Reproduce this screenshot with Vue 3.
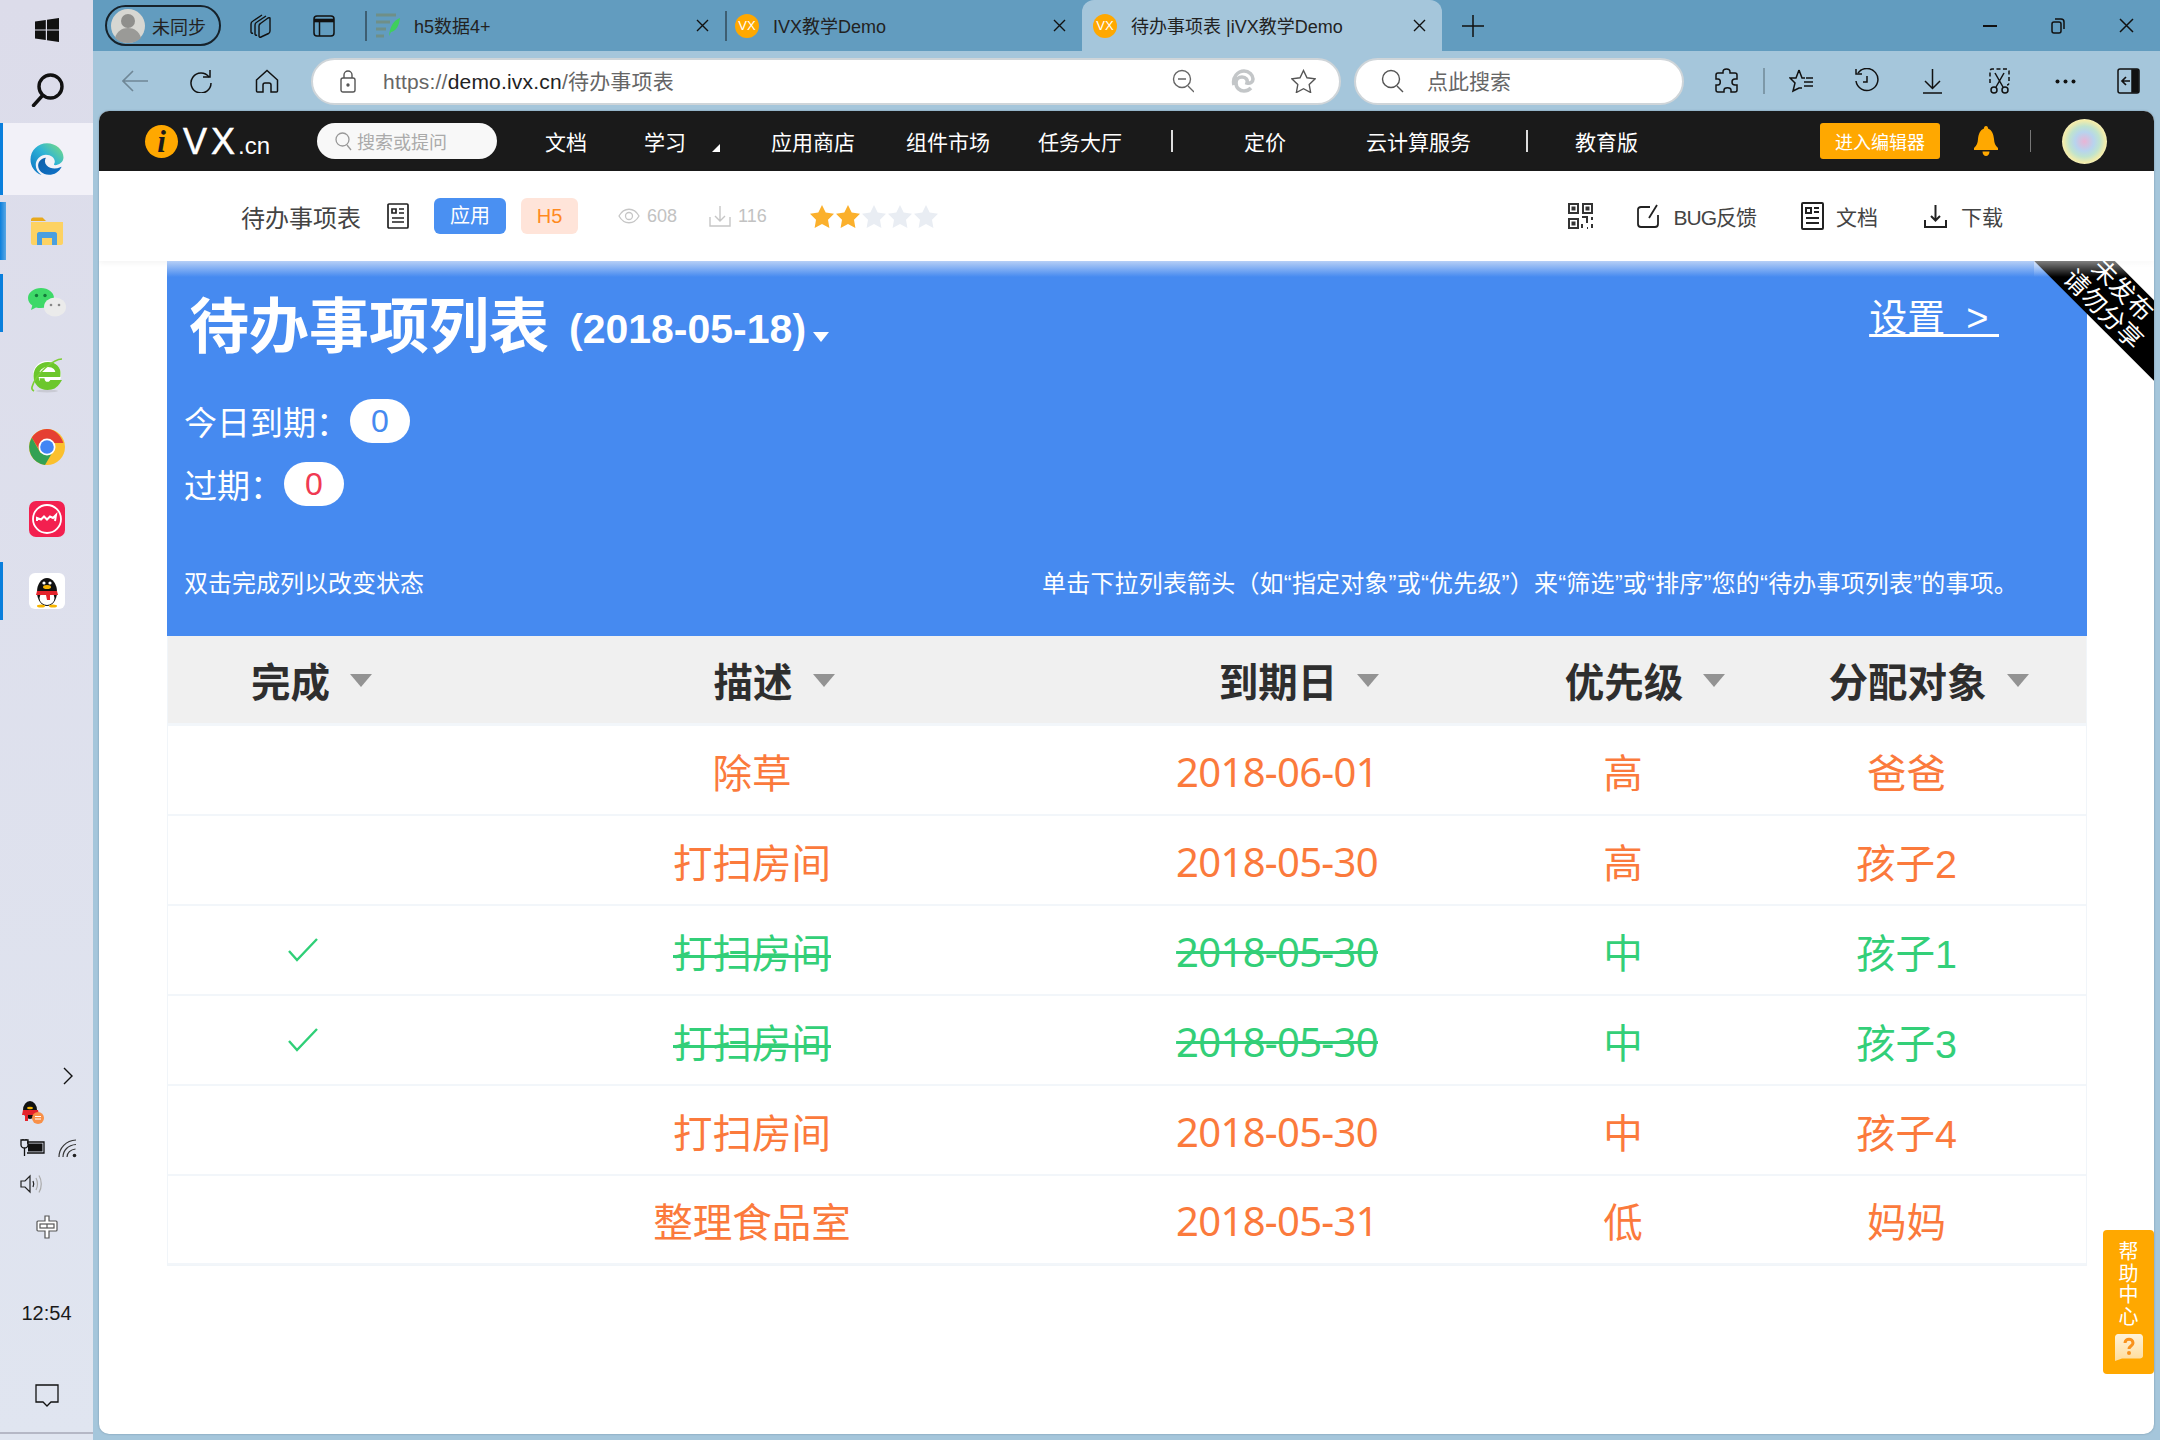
<template>
  <div class="app">
    <!-- vertical windows taskbar -->
    <aside class="taskbar">
      <div class="tb-start">
        <svg width="24" height="24" viewBox="0 0 24 24"><path fill="#111" d="M0 3.5 10.8 2v9.4H0zM12 1.8 24 0v11.4H12zM0 12.6h10.800v9.400L0 20.500zM12 12.600h12V24l-12-1.800z"/></svg>
      </div>
      <div class="tb-search">
        <svg width="34" height="34" viewBox="0 0 34 34" fill="none" stroke="#111" stroke-width="3.400"><circle cx="20.500" cy="13.500" r="11.500"/><path d="M12.500 22.500 3.500 32.500" stroke-linecap="round"/></svg>
      </div>
      <div class="tb-app active"><i class="mark"></i>
        <svg width="36" height="36" viewBox="0 0 24 24">
          <defs>
            <linearGradient id="edgeA" x1="0" y1="1" x2="1" y2="0"><stop offset="0" stop-color="#0b6fc4"/><stop offset=".55" stop-color="#2fb4d6"/><stop offset="1" stop-color="#7fe07a"/></linearGradient>
            <linearGradient id="edgeB" x1="0" y1="0" x2="1" y2="1"><stop offset="0" stop-color="#0d5da8"/><stop offset="1" stop-color="#0f74c9"/></linearGradient>
          </defs>
          <path fill="url(#edgeA)" d="M12 1.500C6 1.500 1 6.200 1 12.300c0 4.300 2.600 8.800 7.400 10.300-2.700-1.700-3.900-4-3.900-6.600 0-3.800 3.300-6.800 6.800-6.800 3.300 0 5.900 2.100 5.900 4.600 0 .7-.2 1.100-.5 1.600-.2.300 0 .7.800.7 2.300 0 5.500-1.700 5.500-5.200C23 6 18 1.500 12 1.500z"/>
          <path fill="url(#edgeB)" d="M21.800 17.100c-.3.100-.6.300-1 .4-3.200 1.400-7 1-9.100-1.400-1.300-1.500-1.400-3.500-.4-5-2.800.2-5.200 2.400-5.200 5.200 0 3.100 2.900 6.200 7.200 6.200 3.600 0 6.800-2 8.500-5.400z"/>
        </svg>
      </div>
      <div class="tb-app"><i class="mark wide"></i>
        <svg width="34" height="28" viewBox="0 0 34 28"><path fill="#e8a91c" d="M1 3c0-1.500 1-2.500 2.500-2.500h9L16 4H1z"/><path fill="#fdd262" d="M1 5h32v21c0 1-1 2-2 2H3c-1 0-2-1-2-2z"/><path fill="#4a9fe0" d="M7 28V17c0-1 1-2 2-2h16c1 0 2 1 2 2v11h-5v-7H12v7z"/></svg>
      </div>
      <div class="tb-app"><i class="mark"></i>
        <svg width="38" height="32" viewBox="0 0 38 32"><path fill="#3ed968" d="M13 1C6 1 0 5.500 0 11c0 3 1.700 5.600 4.300 7.500L3 23l5-2.600c1.500.4 3.200.6 5 .6 7.200 0 13-4.500 13-10S20.200 1 13 1z"/><circle cx="8.500" cy="8.500" r="1.700" fill="#137a3a"/><circle cx="17" cy="8.500" r="1.700" fill="#137a3a"/><ellipse cx="27" cy="20" rx="11" ry="9.500" fill="#ebebeb"/><circle cx="23" cy="18" r="1.300" fill="#888"/><circle cx="31" cy="18" r="1.300" fill="#888"/></svg>
      </div>
      <div class="tb-app">
        <svg width="34" height="36" viewBox="0 0 34 36" fill="none"><ellipse cx="17" cy="34" rx="11" ry="1.500" fill="#c9cad4"/><circle cx="17" cy="18" r="14" fill="#fff"/><path d="M7 17.500h21c.5-6-3.500-10-10-10C11 7.500 6 12 6 19c0 7 5 11.500 11.500 11.500 4.500 0 8-1.800 10-5h-6c-1 1.200-2.400 1.800-4 1.800-3.200 0-5.500-2.500-5.500-6" stroke="#6cc72c" stroke-width="5"/><path d="M32 2C24 2 6 16 2 30c-.6 2 0 3 2 4" stroke="#7dcf36" stroke-width="1.600"/></svg>
      </div>
      <div class="tb-app">
        <svg width="36" height="36" viewBox="0 0 36 36"><circle cx="18" cy="18" r="18" fill="#fbc02d"/><path fill="#e53f33" d="M18 0C11.500 0 6 3.500 2.800 8.700L11 22l3-8h20.400C31.800 6 25.500 0 18 0z"/><path fill="#33a153" d="M2.800 8.700A18 18 0 0 0 16 35.900L23 24H11.500z"/><circle cx="18" cy="18" r="8.500" fill="#fff"/><circle cx="18" cy="18" r="6.800" fill="#4285f4"/></svg>
      </div>
      <div class="tb-app">
        <svg width="36" height="36" viewBox="0 0 36 36" fill="none"><rect width="36" height="36" rx="7" fill="#f3204f"/><circle cx="18" cy="18" r="14" stroke="#fff" stroke-width="1.800"/><path d="M8 20v-3l4 1.500 3-3 3 3 3-3 3 1.500 3-3-1 6" stroke="#fff" stroke-width="2"/></svg>
      </div>
      <div class="tb-app"><i class="mark"></i>
        <svg width="36" height="36" viewBox="0 0 36 36"><rect width="36" height="36" rx="6" fill="#fff"/><ellipse cx="18" cy="19" rx="10" ry="14" fill="#111"/><ellipse cx="18" cy="25" rx="7.500" ry="7" fill="#fff"/><path fill="#e4232b" d="M8 18h20l1 4H21v5h-3l-1-5H7z"/><ellipse cx="18" cy="14" rx="4" ry="2" fill="#f7b500"/><circle cx="15" cy="10" r="1.600" fill="#fff"/><circle cx="21" cy="10" r="1.600" fill="#fff"/><ellipse cx="12" cy="33" rx="4" ry="1.500" fill="#f7b500"/><ellipse cx="24" cy="33" rx="4" ry="1.500" fill="#f7b500"/></svg>
      </div>

      <div class="tb-tray">
        <div class="tray-row right">
          <svg width="10" height="18" viewBox="0 0 10 18" fill="none" stroke="#111" stroke-width="1.400"><path d="M1 1l8 8-8 8"/></svg>
        </div>
        <div class="tray-row">
          <svg width="25" height="25" viewBox="0 0 25 25"><ellipse cx="10" cy="10" rx="7" ry="9" fill="#111"/><path fill="#e4232b" d="M3 10h15l1 5H8v6H5v-6H2z"/><ellipse cx="10" cy="8" rx="3" ry="1.300" fill="#f7b500"/><circle cx="18" cy="18" r="6" fill="#f89048"/><path d="M15 16.500h6M15 19h6" stroke="#fff"/></svg>
        </div>
        <div class="tray-row between">
          <svg width="25" height="18" viewBox="0 0 25 18" fill="none" stroke="#111" stroke-width="1.300"><path d="M1 1v5c0 2 2 3 3.500 3S8 8 8 6V1zM3 1V0M6 1V0M4.500 9v8M8 4h-1"/><path d="M7 3h17v11H7"/><rect x="8" y="4.500" width="14.500" height="8" fill="#111" stroke="none"/></svg>
          <svg width="20" height="19" viewBox="0 0 20 19" fill="none" stroke="#333" stroke-width="1.200"><path d="M1 18C1 9 8 1.500 18 1M5 18c0-6.500 5-12 13-12.500M9 18c0-4 3.500-7.500 8.500-8"/><circle cx="16.500" cy="16.500" r="1.800" fill="#222" stroke="none"/></svg>
        </div>
        <div class="tray-row">
          <svg width="23" height="20" viewBox="0 0 23 20" fill="none" stroke="#222" stroke-width="1.200"><path d="M1 7v6h4l5 5V2L5 7z"/><path d="M13 7c1 2 1 4 0 6" /><path d="M16 4c2 4 2 8 0 12M19 1.500c3 5 3 12 0 17" stroke="#aaa"/></svg>
        </div>
        <div class="tray-ime">
          <svg width="22" height="24" viewBox="0 0 22 24" fill="#fff" stroke="#555" stroke-width="1.200"><path d="M9 1h4v5h7c1 0 1 .5 1 1v8c0 1-.5 1-1 1h-7v7H9v-7H2c-.5 0-1-.5-1-1V7c0-.5.5-1 1-1h7z"/><rect x="4" y="9" width="14" height="4"/><path d="M11 9v4"/></svg>
        </div>
        <div class="tray-clock">12:54</div>
        <div class="tray-ime notify">
          <svg width="24" height="24" viewBox="0 0 24 24" fill="none" stroke="#111" stroke-width="1.300"><path d="M1 1h22v17h-7l-4 4-4-4H1z"/></svg>
        </div>
      </div>
      <div class="tb-line"></div>
    </aside>

    <div class="browser">
      <!-- tab strip -->
      <div class="tabstrip">
        <div class="profile">
          <svg width="34" height="34" viewBox="0 0 34 34"><circle cx="17" cy="17" r="17" fill="#d7d7d2"/><circle cx="17" cy="12" r="7" fill="#8f8f8c"/><path fill="#9a9a97" d="M4 29c2-7 7-10 13-10s11 3 13 10c-3 3-8 5-13 5s-10-2-13-5z"/></svg>
          <span>未同步</span>
        </div>
        <svg class="ts-collect" width="22" height="24" viewBox="0 0 22 24" fill="none" stroke="#111" stroke-width="1.400"><path d="M12 1 3 7c-1 .6-2 2-2 3v8c0 1 1 1.500 2 1"/><path d="M16 2 7 8c-1 .6-2 2-2 3v9c0 1 1 1.500 2 1"/><path d="M20 4v13c0 1-.5 2-1.500 2.500L11 23c-1 .5-2 0-2-1V12c0-1 .5-2 1.500-2.500L18 4c1-.5 2-.5 2 0z"/></svg>
        <svg class="ts-tabs" width="22" height="22" viewBox="0 0 22 22" fill="none" stroke="#111" stroke-width="1.500"><rect x="1" y="1" width="20" height="20" rx="3"/><path d="M1 5.500h20" stroke-width="3.600"/><path d="M6.500 6v15"/></svg>
        <div class="tab first">
          <svg class="fav-doc" width="26" height="26" viewBox="0 0 26 26"><path d="M0 2h20M0 9h14M0 16h10M0 23h8" stroke="#6f8f88" stroke-width="3"/><path fill="#3ecf5c" d="M24 5c-6 2-10 8-11 18l2-4c5-1 8-6 9-14z"/></svg>
          <span class="tab-title">h5数据4+</span>
          <svg class="tab-x" width="13" height="13" viewBox="0 0 13 13" stroke="#111" stroke-width="1.400"><path d="M1 1l11 11M12 1 1 12"/></svg>
        </div>
        <div class="tab second">
          <span class="fav-vx">VX</span>
          <span class="tab-title">IVX教学Demo</span>
          <svg class="tab-x" width="13" height="13" viewBox="0 0 13 13" stroke="#111" stroke-width="1.400"><path d="M1 1l11 11M12 1 1 12"/></svg>
        </div>
        <div class="tab current">
          <span class="fav-vx">VX</span>
          <span class="tab-title">待办事项表 |iVX教学Demo</span>
          <svg class="tab-x" width="13" height="13" viewBox="0 0 13 13" stroke="#111" stroke-width="1.400"><path d="M1 1l11 11M12 1 1 12"/></svg>
        </div>
        <svg class="ts-plus" width="22" height="22" viewBox="0 0 22 22" stroke="#111" stroke-width="1.500"><path d="M11 0v22M0 11h22"/></svg>
        <div class="winctl">
          <svg width="14" height="14" viewBox="0 0 14 14" stroke="#111" stroke-width="2"><path d="M0 7h14"/></svg>
          <svg width="14" height="16" viewBox="0 0 14 16" fill="none" stroke="#111" stroke-width="1.500"><rect x="1" y="4" width="9" height="11" rx="2"/><path d="M4 1h6c2 0 3 1 3 3v7"/></svg>
          <svg width="15" height="15" viewBox="0 0 15 15" stroke="#111" stroke-width="1.500"><path d="M1 1l13 13M14 1 1 14"/></svg>
        </div>
      </div>

      <!-- address bar row -->
      <div class="toolbar">
        <svg width="26" height="22" viewBox="0 0 26 22" fill="none" stroke="#6f8796" stroke-width="1.600"><path d="M11 1 1 11l10 10M1 11h25"/></svg>
        <svg class="tl-reload" width="23" height="24" viewBox="0 0 23 24" fill="none" stroke="#111" stroke-width="1.500"><path d="M20 8a10 10 0 1 0 2 6"/><path d="M21 1v7h-7"/></svg>
        <svg class="tl-home" width="24" height="24" viewBox="0 0 24 24" fill="none" stroke="#111" stroke-width="1.500"><path d="M1.500 11 12 1.500 22.500 11v11c0 .5-.5 1-1 1H16v-7c0-1-1-2-2-2h-4c-1 0-2 1-2 2v7H2.500c-.5 0-1-.5-1-1z"/></svg>
        <div class="urlbar">
          <svg width="16" height="23" viewBox="0 0 16 23" fill="none" stroke="#555" stroke-width="1.400"><rect x="1" y="8" width="14" height="14" rx="2"/><path d="M4 8V5a4 4 0 0 1 8 0v3"/><circle cx="8" cy="15" r="1" fill="#555"/></svg>
          <span class="url"><b>https://</b>demo.ivx.cn<b>/待办事项表</b></span>
          <svg class="ub-zoom" width="22" height="24" viewBox="0 0 22 24" fill="none" stroke="#666" stroke-width="1.400"><circle cx="10" cy="10" r="8.500"/><path d="M16 17l6 6M6 10h8"/></svg>
          <svg class="ub-edge" width="24" height="24" viewBox="0 0 24 24" fill="none" stroke="#c3c6c8" stroke-width="3.600"><path d="M3 16C1 8 7 2 13 2c5 0 9 4 9 8 0 3-3 5-6 4 1-3-1-6-5-6-4 0-6 3-6 6 0 5 4 8 8 8 3 0 5-1 7-3"/></svg>
          <svg class="ub-star" width="25" height="24" viewBox="0 0 25 24" fill="none" stroke="#555" stroke-width="1.400"><path d="M12.500 1.500 16 8.800l8 1.100-5.800 5.600 1.400 8-7.100-3.800-7.100 3.800 1.400-8L1 9.900l8-1.100z"/></svg>
        </div>
        <div class="searchbar">
          <svg width="23" height="24" viewBox="0 0 23 24" fill="none" stroke="#555" stroke-width="1.400"><circle cx="10" cy="10" r="8.500"/><path d="M16 17l6 6"/></svg>
          <span>点此搜索</span>
        </div>
        <svg class="tl-ext" width="23" height="26" viewBox="0 0 23 26" fill="none" stroke="#111" stroke-width="1.500"><path d="M8 4c0-4 7-4 7 0v1h5c1 0 2 1 2 2v4h-2c-4 0-4 6 0 6h2v5c0 1-1 2-2 2h-4v-2c0-3-7-3-7 0v2H3c-1 0-2-1-2-2v-5h2c3 0 3-6 0-6H1V7c0-1 1-2 2-2h5z"/></svg>
        <i class="tl-div"></i>
        <svg class="tl-fav" width="25" height="26" viewBox="0 0 25 26" fill="none" stroke="#111" stroke-width="1.500"><path d="M10 2l3 8h3M10 2 7 10H1l5 5-2 8 6-3h3M15 14h9M17 10h7M15 18h9"/></svg>
        <svg class="tl-hist" width="25" height="26" viewBox="0 0 25 26" fill="none" stroke="#111" stroke-width="1.500"><path d="M3 5a11 11 0 1 1-2 8"/><path d="M1 1v5h6M12 8v6h-4"/></svg>
        <svg class="tl-down" width="19" height="26" viewBox="0 0 19 26" fill="none" stroke="#111" stroke-width="1.500"><path d="M9.500 1v19M2 13l7.500 7.500L17 13M0 25h19"/></svg>
        <svg class="tl-cap" width="25" height="26" viewBox="0 0 25 26" fill="none" stroke="#111" stroke-width="1.500"><path d="M3 15V3c0-1 1-2 2-2h15c1 0 2 1 2 2v12c0 1-1 2-2 2" stroke-dasharray="4 2.500"/><path d="M8 5l8 14M17 5 9 19"/><circle cx="7" cy="22" r="3"/><circle cx="18" cy="22" r="3"/></svg>
        <svg class="tl-dots" width="21" height="5" viewBox="0 0 21 5" fill="#111"><circle cx="2.500" cy="2.500" r="2"/><circle cx="10.500" cy="2.500" r="2"/><circle cx="18.500" cy="2.500" r="2"/></svg>
        <svg class="tl-side" width="23" height="26" viewBox="0 0 23 26" fill="none" stroke="#111" stroke-width="1.500"><rect x="1" y="1" width="21" height="24" rx="2"/><path d="M15 2h6v22h-6z" fill="#111"/><path d="M13 13H6M9 9l-4 4 4 4" stroke-width="1.700"/></svg>
      </div>

      <div class="page">
        <!-- site nav -->
        <header class="topnav">
          <div class="logo">
            <span class="logo-i">i</span>
            <span class="logo-vx">VX</span>
            <span class="logo-cn">.cn</span>
          </div>
          <div class="nav-search">
            <svg width="17" height="19" viewBox="0 0 17 19" fill="none" stroke="#999" stroke-width="1.300"><circle cx="7.500" cy="7.500" r="6.500"/><path d="M12 13l4 5"/></svg>
            <span>搜索或提问</span>
          </div>
          <a class="nav n-doc">文档</a>
          <a class="nav n-learn">学习</a>
          <i class="nav-caret"></i>
          <a class="nav n-store">应用商店</a>
          <a class="nav n-part">组件市场</a>
          <a class="nav n-task">任务大厅</a>
          <i class="nav-bar bar-a"></i>
          <a class="nav n-price">定价</a>
          <a class="nav n-cloud">云计算服务</a>
          <i class="nav-bar bar-b"></i>
          <a class="nav n-edu">教育版</a>
          <button class="editor-btn">进入编辑器</button>
          <svg class="bell" width="24" height="30" viewBox="0 0 24 30" fill="#ffa800"><path d="M12 0c1.500 0 2 1 2 2.500C18 4 19.500 8 20 13c.3 4 1 6.500 4 9v2H0v-2c3-2.500 3.700-5 4-9 .5-5 2-9 6-10.500C10 1 10.500 0 12 0z"/><path d="M8.500 25.500h7c0 2.500-1.500 4.500-3.500 4.500s-3.500-2-3.500-4.500z"/></svg>
          <i class="nav-bar bar-c"></i>
          <span class="avatar"></span>
        </header>

        <!-- app info bar -->
        <div class="subbar">
          <span class="app-name">待办事项表</span>
          <svg class="sb-doc" width="22" height="26" viewBox="0 0 22 26" fill="none" stroke="#222" stroke-width="1.700"><rect x="1" y="1" width="20" height="24" rx="1"/><path d="M5 6h4v4H5zM12 6h5M12 10h5M5 15h12M5 19h12"/></svg>
          <span class="pill blue">应用</span>
          <span class="pill peach">H5</span>
          <svg class="sb-eye" width="22" height="16" viewBox="0 0 22 16" fill="none" stroke="#c6c6c6" stroke-width="1.300"><path d="M1 8c5-9 15-9 20 0-5 9-15 9-20 0z"/><circle cx="11" cy="8" r="3.500"/></svg>
          <span class="stat">608</span>
          <svg class="sb-dl" width="22" height="22" viewBox="0 0 22 22" fill="none" stroke="#c6c6c6" stroke-width="1.400"><path d="M11 1v15M6 11l5 5 5-5M1 12v9h20v-9"/></svg>
          <span class="stat">116</span>
          <div class="stars">
            <svg v-for="n in 5" :key="n" width="24" height="23" viewBox="0 0 24 23" :fill="n <= 2 ? '#fbb02c' : '#e9edf3'"><path d="M12 0l3.700 7.600 8.300 1.200-6 5.900 1.400 8.300L12 19.100l-7.400 3.900L6 14.700 0 8.800l8.300-1.200z"/></svg>
          </div>
          <svg class="sb-qr" width="25" height="26" viewBox="0 0 25 26" fill="none" stroke="#333" stroke-width="2"><rect x="1" y="1" width="9" height="9"/><rect x="15" y="1" width="9" height="9"/><rect x="1" y="16" width="9" height="9"/><path d="M4.500 4.500h2v2h-2zM18.500 4.500h2v2h-2zM4.500 19.500h2v2h-2zM14 14h5v6M24 14v3M14 25v-4M19 25h1M24 21v4"/></svg>
          <svg class="sb-edit" width="22" height="24" viewBox="0 0 22 24" fill="none" stroke="#222" stroke-width="1.800"><path d="M13 3H4C2 3 1 4 1 5.500V20c0 2 1 3 3 3h14c2 0 3-1 3-3v-9M12 14 20 1"/></svg>
          <span class="sb-text bug">BUG反馈</span>
          <svg class="sb-doc2" width="23" height="28" viewBox="0 0 23 28" fill="none" stroke="#222" stroke-width="2"><rect x="1" y="1" width="21" height="26" rx="1"/><path d="M5 6h5v5H5zM13 6h5M13 10h5M5 16h13M5 21h13"/></svg>
          <span class="sb-text doc">文档</span>
          <svg class="sb-dl2" width="23" height="24" viewBox="0 0 23 24" fill="none" stroke="#222" stroke-width="2"><path d="M11.500 1v15M7 12l4.500 4.500L16 12M1 16v7h21v-7"/></svg>
          <span class="sb-text down">下载</span>
        </div>

        <section class="content">
          <div class="banner">
            <div class="banner-top">
              <h1>待办事项列表<small>(2018-05-18)</small><i class="date-caret"></i></h1>
              <a class="settings">设置&nbsp;&nbsp;&gt;&nbsp;</a>
            </div>
            <div class="stat-row first">今日到期：<span class="count today">0</span></div>
            <div class="stat-row">过期：<span class="count late">0</span></div>
            <div class="hints">
              <span>双击完成列以改变状态</span>
              <span class="hint-right">单击下拉列表箭头（如“指定对象”或“优先级”）来“筛选”或“排序”您的“待办事项列表”的事项。</span>
            </div>
          </div>

          <div class="table">
            <div class="thead">
              <div v-for="h in heads" :key="h" class="th" :class="{ 'th-done': h === '完成' }">
                <span class="th-label">{{ h }}<i class="th-caret"></i></span>
              </div>
            </div>
            <div v-for="(r, i) in rows" :key="i" class="tr" :class="{ done: r.done }">
              <div class="td td-check">
                <svg v-if="r.done" width="30" height="24" viewBox="0 0 30 24" fill="none" stroke="#2fcf77" stroke-width="2.400"><path d="M1 13l8 9L29 1"/></svg>
              </div>
              <div class="td strike">{{ r.desc }}</div>
              <div class="td strike date">{{ r.date }}</div>
              <div class="td">{{ r.level }}</div>
              <div class="td">{{ r.owner }}</div>
            </div>
          </div>

          <div class="ribbon"><div class="ribbon-band"><span>未发布</span><span>请勿分享</span></div></div>
        </section>

        <div class="help">
          <span class="help-text">帮助中心</span>
          <svg width="28" height="28" viewBox="0 0 28 28">
            <defs><linearGradient id="helpG" x1="0" y1="0" x2="0" y2="1"><stop offset="0" stop-color="#fff3d9"/><stop offset="1" stop-color="#ffdc9a"/></linearGradient></defs>
            <path fill="url(#helpG)" d="M3 0h22c1.500 0 3 1.500 3 3v19c0 1.500-1.500 2.500-3 2.500H7L0 27V3c0-1.500 1.500-3 3-3z"/>
            <path fill="none" stroke="#f9921c" stroke-width="3" d="M10 9c0-5 8-5 8 0 0 3-4 3-4 6"/><circle cx="14" cy="19" r="2" fill="#f9921c"/>
          </svg>
        </div>
      </div>
    </div>
  </div>
</template>

<script setup>
const heads = ["完成", "描述", "到期日", "优先级", "分配对象"];

const rows = [
  { desc: "除草", date: "2018-06-01", level: "高", owner: "爸爸", done: false },
  { desc: "打扫房间", date: "2018-05-30", level: "高", owner: "孩子2", done: false },
  { desc: "打扫房间", date: "2018-05-30", level: "中", owner: "孩子1", done: true },
  { desc: "打扫房间", date: "2018-05-30", level: "中", owner: "孩子3", done: true },
  { desc: "打扫房间", date: "2018-05-30", level: "中", owner: "孩子4", done: false },
  { desc: "整理食品室", date: "2018-05-31", level: "低", owner: "妈妈", done: false },
];
</script>

<style>
html,
body {
  margin: 0;
  background: #a5c6db;
}
</style>

<style scoped>
.app {
  display: flex;
  width: 2160px;
  height: 1440px;
  overflow: hidden;
  font-family: "Liberation Sans", "Noto Sans CJK SC", sans-serif;
  color: #222;
}

/* taskbar */
.taskbar {
  width: 93px;
  flex: none;
  display: flex;
  flex-direction: column;
  align-items: stretch;
  background: linear-gradient(#dcdcea, #e0e5f0);
}
.tb-start {
  height: 60px;
  display: flex;
  align-items: center;
  justify-content: center;
}
.tb-search {
  height: 63px;
  margin-top: -2px;
  padding-bottom: 2px;
  display: flex;
  align-items: center;
  justify-content: center;
}
.tb-app {
  position: relative;
  height: 72px;
  display: flex;
  align-items: center;
  justify-content: center;
}
.tb-app.active {
  background: #f2f1f8;
}
.mark {
  position: absolute;
  left: 0;
  top: 7px;
  bottom: 7px;
  width: 3px;
  background: #0a7fdc;
}
.tb-app.active .mark {
  top: 0;
  bottom: 0;
}
.mark.wide {
  width: 6px;
  background: linear-gradient(90deg, #0a7fdc, #5aa7e4);
}
.tb-tray {
  margin-top: auto;
}
.tray-row {
  height: 36px;
  display: flex;
  align-items: center;
  padding: 0 15px 0 20px;
}
.tray-row.right {
  justify-content: flex-end;
  padding-right: 20px;
}
.tray-row.between {
  justify-content: space-between;
}
.tray-ime {
  height: 50px;
  display: flex;
  align-items: center;
  justify-content: center;
}
.tray-ime.notify {
  margin-top: 33px;
  margin-bottom: 11px;
}
.tray-clock {
  margin-top: 36px;
  height: 50px;
  line-height: 50px;
  text-align: center;
  font-size: 20px;
  color: #1a1a1a;
}
.tb-line {
  height: 2px;
  margin-bottom: 6px;
  background: #b5b7c5;
}

/* browser chrome */
.browser {
  flex: 1;
  min-width: 0;
  display: flex;
  flex-direction: column;
  background: #a5c6db;
}
.tabstrip {
  height: 51px;
  flex: none;
  display: flex;
  align-items: center;
  padding-left: 12px;
  background: #629cbf;
  font-size: 18px;
  color: #222;
}
.profile {
  width: 116px;
  height: 41px;
  box-sizing: border-box;
  flex: none;
  display: flex;
  align-items: center;
  gap: 7px;
  padding-left: 4px;
  border: 2px solid #16222b;
  border-radius: 21px;
  white-space: nowrap;
}
.ts-collect {
  margin-left: 29px;
}
.ts-tabs {
  margin-left: 41px;
}
.tab {
  position: relative;
  height: 51px;
  flex: none;
  display: flex;
  align-items: center;
  box-sizing: border-box;
  padding: 0 16px 0 11px;
}
.tab.first {
  width: 360px;
  margin-left: 30px;
}
.tab.second {
  width: 357px;
  padding-left: 10px;
}
.tab.current {
  width: 360px;
  background: #a5c6db;
  border-radius: 12px 12px 0 0;
}
.tab.first::before,
.tab.second::before {
  content: "";
  position: absolute;
  left: 0;
  top: 11px;
  width: 2px;
  height: 30px;
  background: #3d5e72;
}
.tab-title {
  flex: 1;
  white-space: nowrap;
  margin-left: 14px;
  padding-bottom: 2px;
}
.tab.first .tab-title {
  margin-left: 12px;
}
.fav-vx {
  width: 24px;
  height: 24px;
  flex: none;
  border-radius: 50%;
  background: #ffa800;
  color: #fff;
  font-size: 13px;
  line-height: 24px;
  text-align: center;
}
.ts-plus {
  margin-left: 20px;
}
.winctl {
  margin-left: auto;
  display: flex;
  align-items: center;
  gap: 54px;
  padding-right: 26px;
}
.toolbar {
  height: 60px;
  flex: none;
  display: flex;
  align-items: center;
  padding-left: 29px;
}
.tl-reload {
  margin-left: 41px;
}
.tl-home {
  margin-left: 43px;
}
.urlbar {
  width: 1030px;
  height: 47px;
  box-sizing: border-box;
  margin-left: 32px;
  display: flex;
  align-items: center;
  padding-left: 27px;
  background: #fff;
  border: 2px solid #cfd5d9;
  border-radius: 24px;
}
.url {
  margin: 0 0 2px 27px;
  font-size: 21px;
  letter-spacing: 0.2px;
  color: #222;
  white-space: nowrap;
}
.url b {
  font-weight: 400;
  color: #666;
}
.ub-zoom {
  margin-left: auto;
}
.ub-edge {
  margin-left: 37px;
}
.ub-star {
  margin-left: 36px;
  margin-right: 23px;
}
.searchbar {
  width: 330px;
  height: 47px;
  box-sizing: border-box;
  margin-left: 13px;
  display: flex;
  align-items: center;
  padding-left: 25px;
  background: #fff;
  border: 2px solid #cfd5d9;
  border-radius: 24px;
  font-size: 21px;
  color: #666;
}
.searchbar span {
  margin: 0 0 2px 23px;
}
.tl-ext {
  margin-left: 31px;
}
.tl-div {
  width: 2px;
  height: 26px;
  margin-left: 25px;
  background: #7d98a8;
}
.tl-fav {
  margin-left: 24px;
}
.tl-hist {
  margin-left: 41px;
}
.tl-down {
  margin-left: 43px;
}
.tl-cap {
  margin-left: 45px;
}
.tl-dots {
  margin-left: 43px;
}
.tl-side {
  margin-left: 41px;
}

/* page */
.page {
  position: relative;
  flex: 1;
  display: flex;
  flex-direction: column;
  margin: 0 6px 6px;
  background: #fff;
  border-radius: 10px;
  overflow: hidden;
  box-shadow: 0 0 2px rgba(60, 90, 110, 0.5);
}
.topnav {
  height: 60px;
  flex: none;
  display: flex;
  align-items: center;
  padding-left: 46px;
  background: #1a1a1a;
  color: #fff;
  font-size: 21px;
}
.logo {
  width: 125px;
  height: 33px;
  flex: none;
  display: flex;
  align-items: flex-start;
  white-space: nowrap;
}
.logo-i {
  width: 33px;
  height: 33px;
  flex: none;
  border-radius: 50%;
  background: #ffa800;
  color: #1a1a1a;
  font: italic 700 31px/33px "Liberation Serif", serif;
  text-align: center;
}
.logo-vx {
  margin-left: 5px;
  font: 400 36px/33px "Liberation Sans", sans-serif;
  letter-spacing: 4px;
  -webkit-text-stroke: 0.5px #fff;
}
.logo-cn {
  margin: 4px 0 0 -1px;
  font: 400 24px/33px "Liberation Sans", sans-serif;
}
.nav-search {
  width: 180px;
  height: 36px;
  box-sizing: border-box;
  margin-left: 47px;
  flex: none;
  display: flex;
  align-items: center;
  gap: 5px;
  padding-left: 18px;
  background: #f8f8f8;
  border-radius: 18px;
  color: #aaa;
  font-size: 18px;
}
.nav {
  flex: none;
  white-space: nowrap;
}
.n-doc {
  margin-left: 48px;
}
.n-learn {
  margin-left: 57px;
}
.nav-caret {
  width: 0;
  height: 0;
  margin: 14px 0 0 26px;
  border-left: 8px solid transparent;
  border-bottom: 8px solid #fff;
}
.n-store {
  margin-left: 51px;
}
.n-part {
  margin-left: 51px;
}
.n-task {
  margin-left: 48px;
}
.n-edu {
  margin-left: 47px;
}
.nav-bar {
  width: 2px;
  height: 22px;
  flex: none;
  background: #ddd;
}
.bar-a {
  margin-left: 49px;
}
.n-price {
  margin-left: 71px;
}
.n-cloud {
  margin-left: 80px;
}
.bar-b {
  margin-left: 55px;
}
.bar-c {
  width: 1px;
  margin-left: 32px;
  background: #777;
}
.editor-btn {
  margin-left: auto;
  width: 120px;
  height: 36px;
  padding: 0;
  border: 0;
  border-radius: 3px;
  background: #ffa800;
  color: #fff;
  font: inherit;
  font-size: 18px;
}
.bell {
  margin-left: 34px;
}
.avatar {
  width: 45px;
  height: 45px;
  margin: 0 47px 0 31px;
  flex: none;
  border-radius: 50%;
  background: radial-gradient(circle, #e9b4d6 0, #b7d4ee 30%, #bfe3cf 48%, #f2ecaa 66%, #ffffff 88%);
}
.subbar {
  height: 90px;
  flex: none;
  display: flex;
  align-items: center;
  padding-left: 142px;
  box-shadow: 0 2px 6px rgba(0, 0, 0, 0.05);
  position: relative;
}
.app-name {
  font-size: 24px;
  color: #444;
  white-space: nowrap;
}
.sb-doc {
  margin-left: 26px;
}
.pill {
  height: 36px;
  line-height: 36px;
  border-radius: 6px;
  text-align: center;
  font-size: 20px;
  flex: none;
}
.pill.blue {
  width: 72px;
  margin-left: 25px;
  background: #4a90f2;
  color: #fff;
}
.pill.peach {
  width: 57px;
  margin-left: 15px;
  background: #ffe4d9;
  color: #ff8a1f;
}
.sb-eye {
  margin-left: 40px;
}
.stat {
  margin-left: 7px;
  font-size: 18px;
  color: #c2c2c2;
}
.sb-dl {
  margin-left: 32px;
}
.stars {
  margin-left: 43px;
  display: flex;
  gap: 2px;
}
.sb-qr {
  margin-left: auto;
}
.sb-edit {
  margin-left: 44px;
}
.sb-text {
  font-size: 21px;
  color: #444;
  white-space: nowrap;
}
.sb-text.bug {
  margin-left: 14px;
  letter-spacing: -1px;
}
.sb-text.doc {
  margin-left: 12px;
}
.sb-text.down {
  margin-left: 14px;
  margin-right: 151px;
}
.sb-doc2 {
  margin-left: 45px;
}
.sb-dl2 {
  margin-left: 46px;
}

/* main content */
.content {
  position: relative;
  flex: 1;
  padding: 0 67px 0 68px;
}
.banner {
  height: 375px;
  box-sizing: border-box;
  padding: 30px 17px 0;
  background: linear-gradient(#b6cff6 0, #468af0 16px);
  color: #fff;
}
.banner-top {
  height: 68px;
  display: flex;
  justify-content: space-between;
}
.banner-top h1 {
  margin: 3px 0 0 5px;
  font-size: 60px;
  font-weight: 700;
  line-height: 68px;
  white-space: nowrap;
}
.banner-top small {
  position: relative;
  top: -5px;
  margin-left: 20px;
  font-size: 41px;
  font-weight: 700;
}
.date-caret {
  position: relative;
  top: -6px;
  display: inline-block;
  margin-left: 7px;
  border-left: 8px solid transparent;
  border-right: 8px solid transparent;
  border-top: 10px solid #fff;
}
.settings {
  margin: -7px 71px 0 0;
  font-size: 38px;
  line-height: 68px;
  text-decoration: underline;
  text-underline-offset: 3px;
  white-space: nowrap;
}
.stat-row {
  height: 44px;
  margin-top: 19px;
  display: flex;
  align-items: center;
  font-size: 33px;
  white-space: nowrap;
}
.stat-row.first {
  margin-top: 40px;
}
.count {
  width: 60px;
  height: 44px;
  margin-left: 1px;
  line-height: 44px;
  border-radius: 22px;
  background: #fff;
  text-align: center;
  font-size: 32px;
}
.today {
  color: #468af0;
}
.late {
  color: #f03a52;
}
.hints {
  margin-top: 58px;
  display: flex;
  justify-content: space-between;
  font-size: 24px;
  line-height: 40px;
  white-space: nowrap;
}
.hint-right {
  margin-right: 52px;
  letter-spacing: 0.17px;
}
.table {
  border: 1px solid #f1f5f9;
  border-top: 0;
}
.thead,
.tr {
  display: grid;
  grid-template-columns: 301px 566px 484px 208px 359px;
}
.thead {
  height: 87px;
  background: #f0f0f0;
  border-bottom: 3px solid #f2f6fa;
}
.th {
  display: flex;
  align-items: center;
  justify-content: center;
  font-size: 39.5px;
  font-weight: 700;
  color: #2e2e2e;
}
.th-done {
  padding-right: 58px;
}
.th-label {
  position: relative;
  left: 1px;
  white-space: nowrap;
}
.th-caret {
  position: absolute;
  left: 100%;
  top: 50%;
  margin: -6px 0 0 20px;
  border-left: 11px solid transparent;
  border-right: 11px solid transparent;
  border-top: 13px solid #939393;
}
.tr {
  height: 90px;
  box-sizing: border-box;
  border-bottom: 2px solid #f2f6fa;
  color: #fb7a3c;
}
.tr:last-child {
  height: 89px;
}
.tr.done {
  color: #33cf78;
}
.td {
  display: flex;
  align-items: center;
  justify-content: center;
  font-size: 39.5px;
  white-space: nowrap;
}
.td-check {
  padding-right: 32px;
}
.date {
  padding-top: 2px;
  font-family: "Noto Sans", sans-serif;
  font-size: 40px;
  letter-spacing: -0.7px;
}
.tr.done .strike {
  text-decoration: line-through;
  text-decoration-thickness: 3px;
}
.ribbon {
  position: absolute;
  top: 0;
  right: 0;
  width: 120px;
  height: 120px;
  overflow: hidden;
}
.ribbon::after {
  content: "";
  position: absolute;
  left: 0;
  right: 0;
  top: 0;
  height: 16px;
  background: linear-gradient(rgba(255, 255, 255, 0.5), rgba(255, 255, 255, 0));
}
.ribbon-band {
  position: absolute;
  left: -51px;
  top: 10px;
  width: 260px;
  height: 57px;
  display: flex;
  flex-direction: column;
  align-items: center;
  justify-content: center;
  background: #000;
  color: #fff;
  font-size: 25px;
  line-height: 27px;
  transform: rotate(45deg);
}
.help {
  position: absolute;
  right: 0;
  bottom: 60px;
  width: 51px;
  height: 144px;
  box-sizing: border-box;
  padding-top: 12px;
  display: flex;
  flex-direction: column;
  align-items: center;
  background: #ffa800;
  border-radius: 4px;
  color: #fff;
}
.help-text {
  width: 20px;
  font-size: 20px;
  line-height: 21.5px;
  margin-bottom: 6px;
}
</style>
